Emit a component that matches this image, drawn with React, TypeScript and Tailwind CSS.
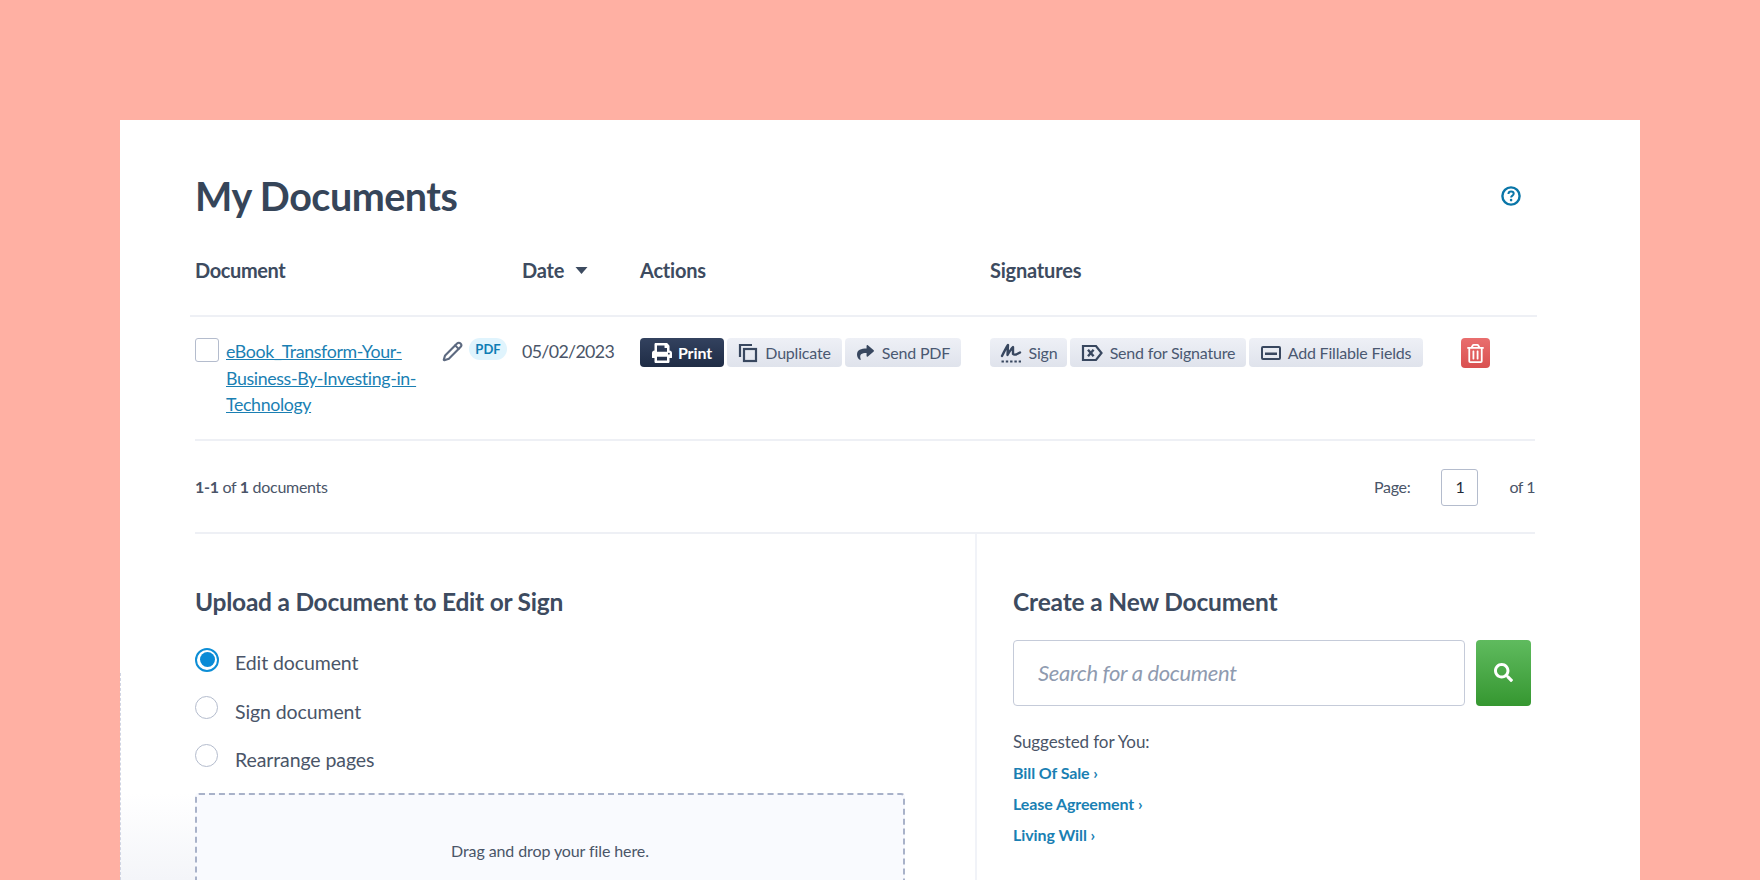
import { FaPrint, FaShare, FaRegTrashAlt, FaSearch } from "react-icons/fa";
import { Pencil } from "lucide-react";

function DuplicateIcon() {
  return (
    <svg viewBox="0 0 20 20" className="h-5 w-5" fill="none" stroke="currentColor" strokeWidth="2.2">
      <path d="M2 14V2h12" />
      <rect x="6" y="6" width="12" height="12" />
    </svg>
  );
}

function SignIcon() {
  return (
    <svg viewBox="0 0 22 22" className="h-[22px] w-[22px]" fill="none" stroke="currentColor">
      <path d="M2 14C4 10 6 6 8 3L7.5 13C9.5 9.5 11 7 13 5L13 12C14 13 16 13 20 10.5" strokeWidth="2.4" strokeLinejoin="round" strokeLinecap="round" />
      <path d="M1.5 19.5H21" strokeWidth="2" strokeDasharray="2.4 1.9" />
    </svg>
  );
}

function SendSignatureIcon() {
  return (
    <svg viewBox="0 0 22 20" className="h-[20px] w-[22px]" fill="none" stroke="currentColor" strokeWidth="2.2">
      <path d="M2 3H15L20.5 10L15 17H2Z" strokeLinejoin="miter" />
      <path d="M7 6.8L12.6 13.2M12.6 6.8L7 13.2" strokeWidth="2.4" />
    </svg>
  );
}

function FillableIcon() {
  return (
    <svg viewBox="0 0 20 14" className="h-[14px] w-[20px]" fill="none">
      <rect x="1" y="1" width="18" height="12" rx="1" stroke="currentColor" strokeWidth="2" />
      <rect x="4" y="6.5" width="12" height="2.5" fill="currentColor" />
    </svg>
  );
}

function HelpIcon() {
  return (
    <svg viewBox="0 0 20 20" className="h-5 w-5 text-[#0a76a8]" fill="none" stroke="currentColor">
      <circle cx="10" cy="10" r="8.6" strokeWidth="2.4" />
      <path d="M7.4 8C7.5 6.4 8.6 5.6 10.1 5.6C11.6 5.6 12.7 6.5 12.7 7.8C12.7 9.6 10.1 9.6 10.1 11.5" strokeWidth="2" />
      <circle cx="10.1" cy="14.1" r="1.3" fill="currentColor" stroke="none" />
    </svg>
  );
}

function GrayButton({ icon, label, width }: { icon: React.ReactNode; label: string; width: string }) {
  return (
    <button className={`flex h-[29px] shrink-0 items-center justify-center gap-[7px] rounded-[4px] bg-gradient-to-b from-[#eef0f6] to-[#dfe3ec] text-[16px] tracking-[-0.2px] text-[#4a5871] ${width}`}>
      <span className="text-[#38475f]">{icon}</span>
      {label}
    </button>
  );
}

function Radio({ label, checked }: { label: string; checked?: boolean }) {
  return (
    <label className="flex h-[48px] items-start gap-[16px] text-[19.5px] tracking-[-0.1px] text-[#4a5568]">
      {checked ? (
        <span className="flex h-[24px] w-[24px] items-center justify-center rounded-full border-2 border-[#0d8ed6] bg-white">
          <span className="h-[15px] w-[15px] rounded-full bg-[#0a8bd6]" />
        </span>
      ) : (
        <span className="h-[23px] w-[23px] rounded-full border border-[#b4bccd] bg-white" />
      )}
      <span className={checked ? "mt-[3px] leading-[24px]" : "mt-[4px] ml-[1px] leading-[24px]"}>{label}</span>
    </label>
  );
}

export default function App() {
  return (
    <div className="h-[880px] overflow-hidden bg-[#ffb0a3] px-[120px] pt-[120px] font-['Lato',sans-serif] text-[#4a5568]">
      <div className="relative h-[760px] bg-white">
        {/* faint leftovers of the page behind the card */}
        <div className="absolute bottom-0 left-0 h-[87px] w-[75px] bg-gradient-to-b from-white to-[#f4f5f9]" />
        <div className="absolute top-[553px] bottom-0 left-0 border-l border-dashed border-[#cfd4e3]" />

        <div className="relative pt-[52px]">
          <div className="mr-[103px] ml-[75px] flex items-start justify-between">
            <h1 className="text-[39.5px] leading-[48px] font-bold tracking-[-0.5px] text-[#364559]">My Documents</h1>
            <div className="mt-[14px] mr-[16px]">
              <HelpIcon />
            </div>
          </div>

          <div className="mt-[36px] mr-[103px] ml-[70px] flex border-b-2 border-[#eef0f5] pb-[31px] pl-[5px] text-[20px] leading-[28px] font-bold tracking-[-0.2px] text-[#3d4b60]">
            <div className="w-[327px] tracking-[-0.4px]">Document</div>
            <div className="flex w-[118px] items-center gap-[11px]">
              Date
              <svg viewBox="0 0 12 7" className="h-[7px] w-[13px] text-[#3d4b60]">
                <path d="M0 0H12L6 7Z" fill="currentColor" />
              </svg>
            </div>
            <div className="w-[350px]">Actions</div>
            <div>Signatures</div>
          </div>

          <div className="mr-[105px] ml-[75px] flex border-b-2 border-[#eef0f5] pt-[21px] pb-[21.5px]">
            <div className="flex w-[327px] shrink-0">
              <span className="h-[24px] w-[24px] shrink-0 rounded-[3px] border border-[#b4bccd] bg-white" />
              <a className="ml-[7px] w-[194px] shrink-0 text-[17.8px] leading-[26.5px] tracking-[-0.37px] text-[#1a7fb3] underline">
                eBook_Transform-Your-Business-By-Investing-in-Technology
              </a>
              <span className="mt-[3px] ml-[22px] text-[#5d6a80]">
                <Pencil className="h-[21px] w-[21px]" strokeWidth={2.4} />
              </span>
              <span className="ml-[6px] flex h-[22px] w-[38px] items-center justify-center rounded-full bg-[#e0f4fd] text-[13px] leading-none font-bold text-[#0e7db5]">
                PDF
              </span>
            </div>
            <div className="w-[118px] shrink-0 text-[17.8px] leading-[27px] tracking-[-0.65px]">05/02/2023</div>
            <div className="flex w-[350px] shrink-0 gap-[3px]">
              <button className="flex h-[29px] w-[84px] items-center justify-center gap-[6px] rounded-[4px] bg-gradient-to-b from-[#33425f] to-[#1f2c45] text-[16px] font-bold tracking-[-0.1px] text-white">
                <FaPrint className="h-[20px] w-[20px]" />
                Print
              </button>
              <GrayButton icon={<DuplicateIcon />} label="Duplicate" width="w-[115px]" />
              <GrayButton icon={<FaShare className="h-[17px] w-[19px]" />} label="Send PDF" width="w-[116px]" />
            </div>
            <div className="flex gap-[3px]">
              <GrayButton icon={<SignIcon />} label="Sign" width="w-[77px]" />
              <GrayButton icon={<SendSignatureIcon />} label="Send for Signature" width="w-[176px]" />
              <GrayButton icon={<FillableIcon />} label="Add Fillable Fields" width="w-[174px]" />
              <button className="ml-[35px] flex h-[30px] w-[29px] shrink-0 items-center justify-center rounded-[4px] bg-gradient-to-b from-[#e96e6e] to-[#d95050] text-white">
                <FaRegTrashAlt className="h-[19px] w-[19px]" />
              </button>
            </div>
          </div>

          <div className="mr-[105px] ml-[75px] flex h-[92.5px] items-center justify-between border-b-2 border-[#eef0f5] pt-[2px] text-[16px] tracking-[-0.3px]">
            <div>
              <b>1-1</b> of <b>1</b> documents
            </div>
            <div className="flex items-center">
              <span>Page:</span>
              <span className="mr-[31px] ml-[31px] flex h-[37px] w-[37px] items-center justify-center rounded-[3px] border border-[#b4bccd] text-[#1f2937]">1</span>
              <span className="tracking-[-0.5px]">of 1</span>
            </div>
          </div>

          <div className="flex">
            <div className="w-[857px] border-r-2 border-[#f1f3f8] pt-[50px] pl-[75px]">
              <h2 className="text-[24.5px] leading-[36px] font-bold tracking-[-0.24px] text-[#3d4b60]">Upload a Document to Edit or Sign</h2>
              <div className="mt-[28px]">
                <Radio label="Edit document" checked />
                <Radio label="Sign document" />
                <Radio label="Rearrange pages" />
              </div>
              <div className="mt-[1px] flex h-[120px] w-[710px] justify-center rounded-[4px] border-2 border-dashed border-[#a9b2c9] bg-[#f9fafe] pt-[44px] text-[16px] tracking-[-0.1px]">
                Drag and drop your file here.
              </div>
            </div>
            <div className="pt-[50px] pl-[36px]">
              <h2 className="text-[24.5px] leading-[36px] font-bold tracking-[-0.16px] text-[#3d4b60]">Create a New Document</h2>
              <div className="mt-[20px] flex gap-[11px]">
                <div className="flex h-[66px] w-[452px] items-center rounded-[4px] border-[1.5px] border-[#c5cbd9] pl-[24px] text-[22px] tracking-[-0.32px] text-[#8f9bb0] italic">
                  Search for a document
                </div>
                <button className="flex h-[66px] w-[55px] items-center justify-center rounded-[4px] bg-gradient-to-b from-[#5fbb5e] to-[#359730] text-white">
                  <FaSearch className="h-[19px] w-[19px]" />
                </button>
              </div>
              <div className="mt-[24px] text-[17px] leading-[24px] tracking-[-0.1px]">Suggested for You:</div>
              <div className="mt-[7px] flex flex-col gap-[7px] text-[16px] leading-[24px] font-bold tracking-[-0.1px] text-[#1a7fb3]">
                <a>Bill Of Sale ›</a>
                <a>Lease Agreement ›</a>
                <a>Living Will ›</a>
              </div>
            </div>
          </div>
        </div>
      </div>
    </div>
  );
}
